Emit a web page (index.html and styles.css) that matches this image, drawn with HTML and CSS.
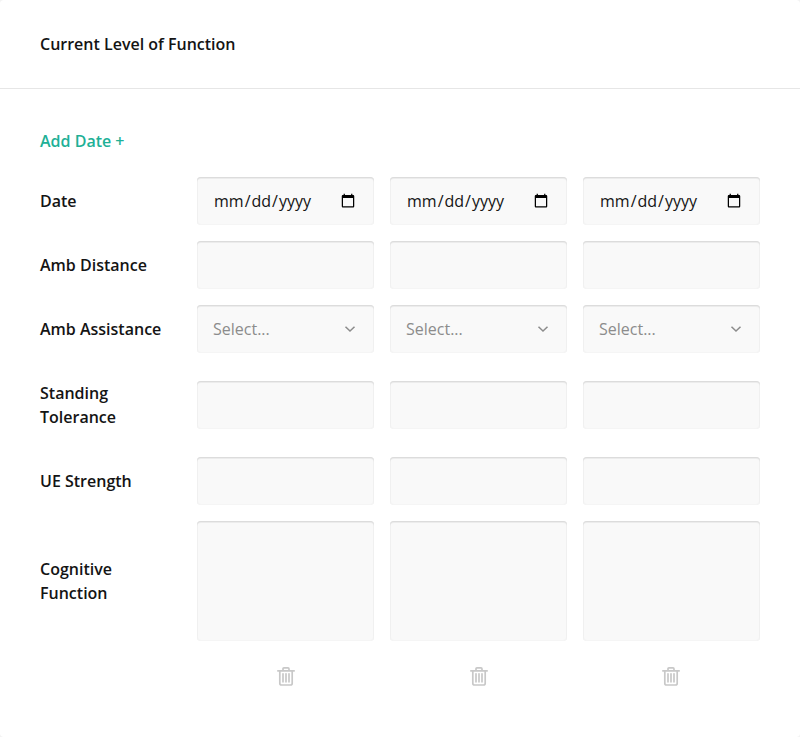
FILE: index.html
```html
<!DOCTYPE html>
<html lang="en">
<head>
<meta charset="utf-8">
<title>Current Level of Function</title>
<link rel="stylesheet" href="styles.css">
</head>
<body>
<svg class="sprite">
  <symbol id="chevron" viewBox="0 0 12 8"><path d="M1.500 1.700 6 6l4.500-4.300" fill="none" stroke="currentColor" stroke-width="1.500"/></symbol>
  <symbol id="trash" viewBox="0 0 18 20"><path d="M.8 4.800H17.200M6 4.500V2.900Q6 1.900 7 1.900H11Q12 1.900 12 2.900V4.500M2.800 4.800V17.200Q2.800 19 4.600 19H13.400Q15.200 19 15.200 17.200V4.800M6 7.800V15.800M9 7.800V15.800M12 7.800V15.800" fill="none" stroke="currentColor" stroke-width="1.700" stroke-linecap="round"/></symbol>
</svg>
<main class="card">
  <header class="card-header"><h1>Current Level of Function</h1></header>
  <section class="card-body">
    <button class="add">Add Date +</button>
    <div class="grid">
      <div class="label">Date</div>
      <input class="field date" type="date"><input class="field date" type="date"><input class="field date" type="date">
      <div class="label">Amb Distance</div>
      <input class="field"><input class="field"><input class="field">
      <div class="label">Amb Assistance</div>
      <div class="field select"><span>Select...</span><svg class="chevron"><use href="#chevron"/></svg></div>
      <div class="field select"><span>Select...</span><svg class="chevron"><use href="#chevron"/></svg></div>
      <div class="field select"><span>Select...</span><svg class="chevron"><use href="#chevron"/></svg></div>
      <div class="label">Standing Tolerance</div>
      <input class="field"><input class="field"><input class="field">
      <div class="label">UE Strength</div>
      <input class="field"><input class="field"><input class="field">
      <div class="label">Cognitive Function</div>
      <textarea class="field area"></textarea><textarea class="field area"></textarea><textarea class="field area"></textarea>
      <div></div>
      <button class="remove"><svg><use href="#trash"/></svg></button>
      <button class="remove"><svg><use href="#trash"/></svg></button>
      <button class="remove last"><svg><use href="#trash"/></svg></button>
    </div>
  </section>
</main>
</body>
</html>
```
FILE: styles.css
```css
* { box-sizing: border-box; }
body {
  margin: 0;
  background: #f3f3f3;
  color: #141414;
  font: 400 16px/24px "Open Sans", sans-serif;
}
.sprite { display: none; }
.card {
  height: 737px;
  background: #fff;
  border-radius: 4px;
}
.card-header {
  height: 89px;
  padding: 32px 40px;
  border-bottom: 1px solid #e6e6e6;
}
h1 { margin: 0; font-size: 16px; font-weight: 600; }
.card-body { padding: 40px; }
button {
  display: block;
  padding: 0;
  border: 0;
  background: none;
  font: inherit;
}
.add { color: #20b096; font-weight: 600; }
.grid {
  display: grid;
  grid-template-columns: 141px repeat(3, 177px);
  gap: 16px;
  margin-top: 24px;
  align-items: center;
}
.label { padding: 12px 0; font-weight: 600; }
.field {
  display: block;
  width: 100%;
  height: 48px;
  margin: 0;
  padding: 0 16px;
  border: 0;
  border-radius: 4px;
  outline: 0;
  background: #f9f9f9;
  box-shadow: inset 0 1px 0 #dcdcdc, inset 0 2px 0 #ececec, inset 0 -1px 0 #f5f5f5, inset 0 0 0 1px #f0f0f0;
  color: #141414;
  font: inherit;
}
.area { height: 120px; resize: none; }
.select {
  display: flex;
  align-items: center;
  justify-content: space-between;
  padding-right: 18px;
  color: #8c8c8c;
}
.chevron { width: 12px; height: 8px; }
.remove {
  justify-self: center;
  margin-top: 9px;
  color: #c8c8c8;
}
.remove.last { margin-right: 2px; }
.remove svg { display: block; width: 18px; height: 20px; }
```
